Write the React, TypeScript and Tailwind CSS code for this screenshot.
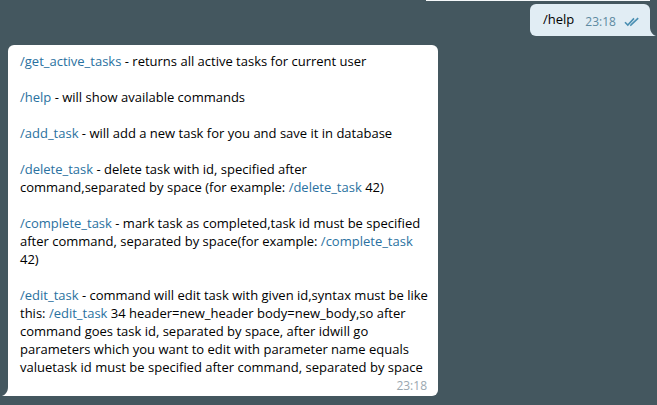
import React from "react";

const L = ({ children }: { children: React.ReactNode }) => (
  <span className="text-[#2a71a0]">{children}</span>
);

export default function App() {
  return (
    <div
      className="w-[657px] h-[405px] bg-[#44575f] overflow-hidden flex flex-col"
      style={{ fontFamily: '"Open Sans", "Noto Sans", sans-serif' }}
    >
      <div className="flex justify-end pr-[7px]">
        <div className="w-[224px] h-[1px] bg-[#f5f8fa]" />
      </div>
      <div className="flex justify-end pr-[7px] mt-[3px]">
        <div className="relative bg-[#e1edf4] rounded-[6px] rounded-br-none h-[32px] w-[120px] flex items-center pl-[13px] text-[13px] text-[#000]">
          <span className="leading-[18px] -mt-[2px]">/help</span>
          <span className="ml-[11px] text-[12px] text-[#5d8aa1] mt-[4px]">23:18</span>
          <svg className="ml-[8px] mt-[4px]" width="17" height="10" viewBox="0 0 17 10">
            <path d="M1 5.2 L3.8 8 L10 1.4" fill="none" stroke="#4a8fb2" strokeWidth="1.6" />
            <path d="M6.4 7.8 L6.8 8.2 L14.2 1.2" fill="none" stroke="#4a8fb2" strokeWidth="1.6" />
          </svg>
          <svg className="absolute -right-[6px] bottom-0" width="6" height="9" viewBox="0 0 6 9">
            <path d="M0 0 C0 5 3 8 6 9 L0 9 Z" fill="#e1edf4" />
          </svg>
        </div>
      </div>
      <div className="ml-[8px] mt-[9px]">
        <div className="relative bg-white rounded-[6px] rounded-bl-none w-[430px] h-[351px] pl-[12px] pr-[10px] pt-[7px] text-[13px] leading-[18px] text-black">
          <div className="w-[408px]">
            <p>
              <L>/get_active_tasks</L> - returns all active tasks for current user
            </p>
            <p className="mt-[18px]">
              <L>/help</L> - will show available commands
            </p>
            <p className="mt-[18px]">
              <L>/add_task</L> - will add a new task for you and save it in database
            </p>
            <p className="mt-[18px]">
              <L>/delete_task</L> - delete task with id, specified after command,separated by space (for example: <L>/delete_task</L> 42)
            </p>
            <p className="mt-[18px]">
              <L>/complete_task</L> - mark task as completed,task id must be specified after command, separated by space(for example: <L>/complete_task</L> 42)
            </p>
            <p className="mt-[18px]">
              <L>/edit_task</L> - command will edit task with given id,syntax must be like this: <L>/edit_task</L> 34 header=new_header body=new_body,so after command goes task id, separated by space, after idwill go parameters which you want to edit with parameter name equals valuetask id must be specified after command, separated by space
            </p>
          </div>
          <div className="absolute right-[11px] bottom-[2px] text-[12px] leading-[16px] text-[#9aa7b0]">23:18</div>
          <svg className="absolute -left-[6px] bottom-0" width="6" height="9" viewBox="0 0 6 9">
            <path d="M6 0 C6 5 3 8 0 9 L6 9 Z" fill="#ffffff" />
          </svg>
        </div>
      </div>
    </div>
  );
}
